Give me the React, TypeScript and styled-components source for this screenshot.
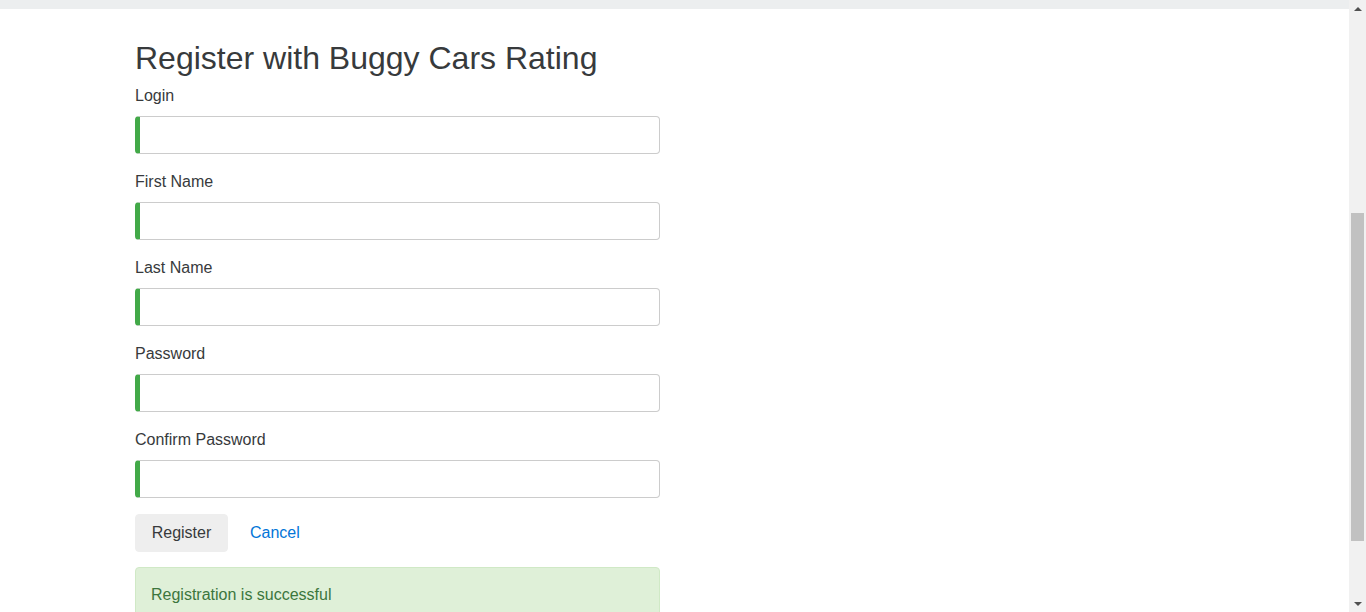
import styled, { createGlobalStyle } from 'styled-components';

const GlobalStyle = createGlobalStyle`
  html, body {
    margin: 0;
    padding: 0;
    height: 612px;
    overflow: hidden;
    background: #fff;
  }
  body {
    font-family: 'Liberation Sans', Arial, sans-serif;
    font-size: 16px;
    line-height: 1.5;
    color: #373a3c;
  }
  * {
    box-sizing: border-box;
  }
`;

const Shell = styled.div`
  display: flex;
  height: 612px;
  width: 1366px;
`;

const Page = styled.div`
  flex: 1;
  display: flex;
  flex-direction: column;
  overflow: hidden;
`;

const TopBar = styled.div`
  flex-shrink: 0;
  height: 9px;
  background: #eceeef;
`;

const Content = styled.main`
  flex-shrink: 0;
  padding: 32px 0 0 135px;
`;

const Form = styled.form`
  width: 525px;
`;

const Title = styled.h2`
  margin: 0 0 8px;
  font-size: 32px;
  font-weight: 500;
  line-height: 1.1;
  color: #373a3c;
`;

const Group = styled.div`
  margin-bottom: 16px;
`;

const Label = styled.label`
  display: block;
  margin-bottom: 8px;
  line-height: 24px;
`;

const Input = styled.input`
  display: block;
  width: 100%;
  height: 38px;
  padding: 8px 12px;
  font-size: 16px;
  font-family: inherit;
  color: #55595c;
  background: #fff;
  border: 1px solid #ccc;
  border-left: 5px solid #42a948;
  border-radius: 4px;
  outline: none;
`;

const Actions = styled.div`
  display: flex;
  align-items: center;
`;

const Button = styled.button`
  width: 93px;
  height: 38px;
  padding: 0;
  font-family: inherit;
  font-size: 16px;
  line-height: 24px;
  text-align: center;
  color: #373a3c;
  background: #eeeeee;
  border: 1px solid #eeeeee;
  border-radius: 4px;
`;

const CancelLink = styled.a`
  margin-left: 22px;
  color: #0275d8;
  text-decoration: none;
  cursor: pointer;
`;

const Alert = styled.div`
  margin-top: 15px;
  padding: 15px 15px 20px;
  line-height: 24px;
  color: #3c763d;
  background: #dff0d8;
  border: 1px solid #d0e9c6;
  border-radius: 4px;
`;

const Scrollbar = styled.div`
  width: 17px;
  height: 612px;
  background: #f1f1f1;
  display: flex;
  flex-direction: column;
`;

const ArrowButton = styled.div<{ $down?: boolean }>`
  height: 17px;
  display: flex;
  align-items: center;
  justify-content: center;

  &::before {
    content: '';
    width: 0;
    height: 0;
    border-left: 4px solid transparent;
    border-right: 4px solid transparent;
    ${(p) => (p.$down ? 'border-top: 4px solid #505050;' : 'border-bottom: 4px solid #505050;')}
  }
`;

const Spacer = styled.div<{ $grow?: boolean }>`
  height: 196px;
  ${(p) => (p.$grow ? 'height: auto; flex: 1;' : '')}
`;

const Thumb = styled.div`
  height: 328px;
  margin: 0 2px;
  background: #c1c1c1;
`;

const fields = ['Login', 'First Name', 'Last Name', 'Password', 'Confirm Password'];

export default function App() {
  return (
    <>
      <GlobalStyle />
      <Shell>
        <Page>
          <TopBar />
          <Content>
            <Form onSubmit={(e) => e.preventDefault()}>
              <Title>Register with Buggy Cars Rating</Title>
              {fields.map((f) => (
                <Group key={f}>
                  <Label>{f}</Label>
                  <Input type={f.includes('Password') ? 'password' : 'text'} />
                </Group>
              ))}
              <Actions>
                <Button type="submit">Register</Button>
                <CancelLink>Cancel</CancelLink>
              </Actions>
              <Alert>Registration is successful</Alert>
            </Form>
          </Content>
        </Page>
        <Scrollbar>
          <ArrowButton />
          <Spacer />
          <Thumb />
          <Spacer $grow />
          <ArrowButton $down />
        </Scrollbar>
      </Shell>
    </>
  );
}
